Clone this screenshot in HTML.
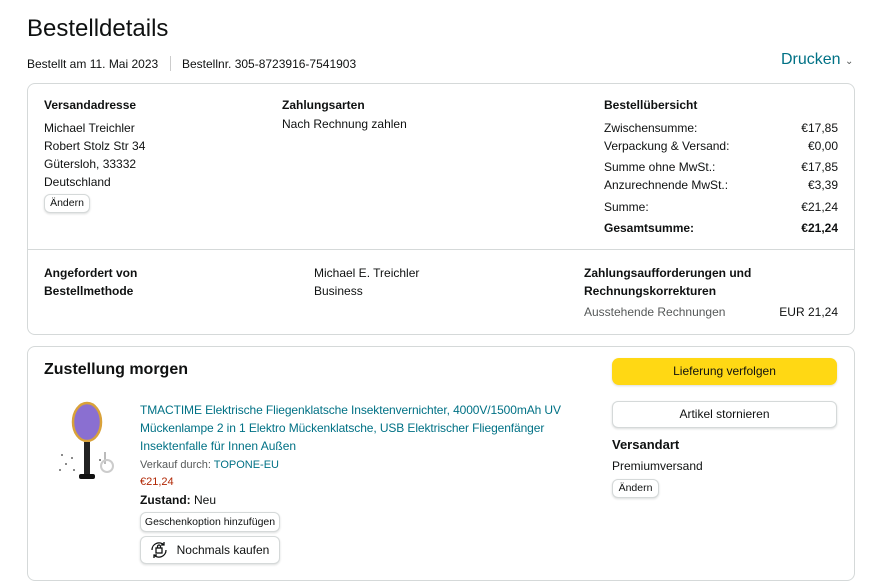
<!DOCTYPE html><html><head><style>
body{margin:0;width:890px;height:588px;background:#fff;font-family:"Liberation Sans",sans-serif;color:#0f1111;position:relative;overflow:hidden}
.a{position:absolute;white-space:nowrap;font-size:12px;line-height:18px}
.b{font-weight:bold}
.box{position:absolute;border:1px solid #d5d9d9;border-radius:8px;box-sizing:border-box}
.btn{position:absolute;border:1px solid #d5d9d9;border-radius:6px;font-size:10.5px;text-align:center;box-sizing:border-box;background:#fff;box-shadow:0 1px 2px rgba(15,17,17,.15)}
.l{color:#007185}
</style></head><body>
<div class="a" style="left:27px;top:14px;font-size:24px;line-height:30px">Bestelldetails</div>
<div class="a" style="left:27px;top:55px">Bestellt am 11. Mai 2023</div>
<div style="position:absolute;left:170px;top:56px;width:1px;height:15px;background:#ccc"></div>
<div class="a" style="left:182px;top:55px">Bestellnr. 305-8723916-7541903</div>
<div class="a" style="left:781px;top:50px;font-size:16px;line-height:20px;color:#007185">Drucken <span style="font-size:10px;color:#565959">⌄</span></div>

<div class="box" style="left:27px;top:83px;width:828px;height:252px"></div>
<div class="a b" style="left:44px;top:96px">Versandadresse</div>
<div class="a" style="left:44px;top:119px">Michael Treichler</div>
<div class="a" style="left:44px;top:137px">Robert Stolz Str 34</div>
<div class="a" style="left:44px;top:155px">Gütersloh, 33332</div>
<div class="a" style="left:44px;top:173px">Deutschland</div>
<div class="btn" style="left:44px;top:194px;width:46px;height:19px;line-height:17px">Ändern</div>
<div class="a b" style="left:282px;top:96px">Zahlungsarten</div>
<div class="a" style="left:282px;top:115px">Nach Rechnung zahlen</div>
<div class="a b" style="left:604px;top:96px">Bestellübersicht</div>
<div class="a" style="left:604px;top:119px">Zwischensumme:</div><div class="a" style="left:740px;top:119px;width:98px;text-align:right">€17,85</div>
<div class="a" style="left:604px;top:137px">Verpackung &amp; Versand:</div><div class="a" style="left:740px;top:137px;width:98px;text-align:right">€0,00</div>
<div class="a" style="left:604px;top:158px">Summe ohne MwSt.:</div><div class="a" style="left:740px;top:158px;width:98px;text-align:right">€17,85</div>
<div class="a" style="left:604px;top:176px">Anzurechnende MwSt.:</div><div class="a" style="left:740px;top:176px;width:98px;text-align:right">€3,39</div>
<div class="a" style="left:604px;top:198px">Summe:</div><div class="a" style="left:740px;top:198px;width:98px;text-align:right">€21,24</div>
<div class="a b" style="left:604px;top:219px">Gesamtsumme:</div><div class="a b" style="left:740px;top:219px;width:98px;text-align:right">€21,24</div>
<div style="position:absolute;left:28px;top:249px;width:826px;height:1px;background:#d5d9d9"></div>
<div class="a b" style="left:44px;top:264px">Angefordert von</div>
<div class="a b" style="left:44px;top:282px">Bestellmethode</div>
<div class="a" style="left:314px;top:264px">Michael E. Treichler</div>
<div class="a" style="left:314px;top:282px">Business</div>
<div class="a b" style="left:584px;top:264px">Zahlungsaufforderungen und</div>
<div class="a b" style="left:584px;top:282px">Rechnungskorrekturen</div>
<div class="a" style="left:584px;top:303px;color:#565959">Ausstehende Rechnungen</div><div class="a" style="left:740px;top:303px;width:98px;text-align:right">EUR 21,24</div>

<div class="box" style="left:27px;top:346px;width:828px;height:235px"></div>
<div class="a b" style="left:44px;top:359px;font-size:16px;line-height:22px">Zustellung morgen</div>
<svg style="position:absolute;left:56px;top:400px" width="66" height="84" viewBox="0 0 66 84">
<ellipse cx="31" cy="22" rx="14" ry="19" fill="#8a6fd1" stroke="#d9a23a" stroke-width="2.5"/>
<rect x="28" y="42" width="6" height="34" fill="#222"/><rect x="23" y="74" width="16" height="5" rx="2" fill="#111"/>
<path d="M49 52v12" stroke="#bbb" stroke-width="2"/>
<circle cx="51" cy="66" r="6" fill="none" stroke="#ccc" stroke-width="2"/>
<g fill="#666"><circle cx="6" cy="55" r="1"/><circle cx="10" cy="64" r="1"/><circle cx="4" cy="70" r="1"/><circle cx="16" cy="58" r="1"/><circle cx="44" cy="60" r="1"/><circle cx="18" cy="70" r="1"/></g></svg>
<div class="a l" style="left:140px;top:401px;letter-spacing:-0.1px">TMACTIME Elektrische Fliegenklatsche Insektenvernichter, 4000V/1500mAh UV</div>
<div class="a l" style="left:140px;top:419px;letter-spacing:-0.1px">Mückenlampe 2 in 1 Elektro Mückenklatsche, USB Elektrischer Fliegenfänger</div>
<div class="a l" style="left:140px;top:437px">Insektenfalle für Innen Außen</div>
<div class="a" style="left:140px;top:456px;font-size:11px;color:#565959">Verkauf durch: <span style="color:#007185">TOPONE-EU</span></div>
<div class="a" style="left:140px;top:473px;font-size:11px;color:#b12704">€21,24</div>
<div class="a" style="left:140px;top:491px"><b>Zustand:</b> Neu</div>
<div class="btn" style="left:140px;top:512px;width:140px;height:20px;line-height:18px">Geschenkoption hinzufügen</div>
<div class="btn" style="left:140px;top:536px;width:140px;height:28px;line-height:26px;font-size:12px;padding-left:26px">Nochmals kaufen</div>
<svg style="position:absolute;left:148px;top:540px" width="22" height="20" viewBox="0 0 22 20" fill="none" stroke="#0f1111" stroke-width="1.3"><path d="M4 10a7 7 0 0 1 12-5M18 10a7 7 0 0 1-12 5M16 2v3h-3M6 18v-3h3"/><rect x="8" y="8" width="6" height="5"/><path d="M9.5 8V6.5a1.5 1.5 0 0 1 3 0V8"/></svg>
<div style="position:absolute;left:612px;top:358px;width:225px;height:27px;background:#ffd814;border-radius:7px;font-size:12px;line-height:27px;text-align:center;box-shadow:0 1px 2px rgba(15,17,17,.15)">Lieferung verfolgen</div>
<div class="btn" style="left:612px;top:401px;width:225px;height:27px;line-height:25px;font-size:12px">Artikel stornieren</div>
<div class="a b" style="left:612px;top:436px;font-size:13px">Versandart</div>
<div class="a" style="left:612px;top:457px">Premiumversand</div>
<div class="btn" style="left:612px;top:479px;width:47px;height:19px;line-height:17px">Ändern</div>
</body></html>
